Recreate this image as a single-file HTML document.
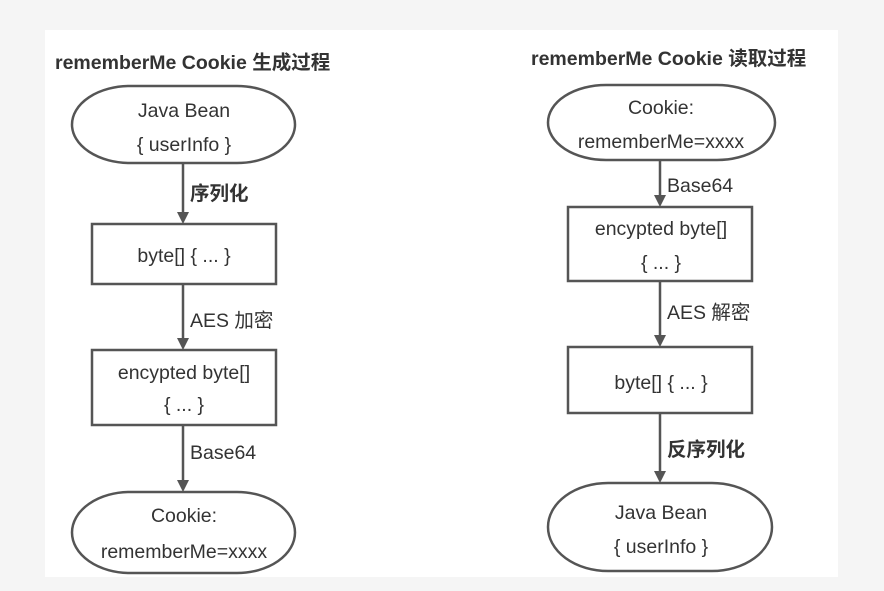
<!DOCTYPE html>
<html><head><meta charset="utf-8"><style>
html,body{margin:0;padding:0;background:#f5f5f5;width:884px;height:591px;overflow:hidden}
svg{display:block}
text{font-family:"Liberation Sans","Noto Sans CJK SC",sans-serif;fill:#333;font-size:19.5px}
.b{font-weight:bold}
</style></head><body>
<svg width="884" height="591" viewBox="0 0 884 591">
<rect x="45" y="30" width="793" height="547" fill="#fff"/>
<g stroke="#555" stroke-width="2.5" fill="none">
<rect x="72" y="86" width="223" height="77" rx="58" ry="38.5"/>
<rect x="92" y="224" width="184" height="60"/>
<rect x="92" y="350" width="184" height="75"/>
<rect x="72" y="492" width="223" height="81" rx="58" ry="40.5"/>
<line x1="183" y1="163" x2="183" y2="214"/>
<line x1="183" y1="284" x2="183" y2="340"/>
<line x1="183" y1="425" x2="183" y2="482"/>
<rect x="548" y="85" width="227" height="75" rx="58" ry="37.5"/>
<rect x="568" y="207" width="184" height="74"/>
<rect x="568" y="347" width="184" height="66"/>
<rect x="548" y="483" width="224" height="88" rx="60" ry="44"/>
<line x1="660" y1="160" x2="660" y2="197"/>
<line x1="660" y1="281" x2="660" y2="337"/>
<line x1="660" y1="413" x2="660" y2="473"/>
</g>
<g fill="#555">
<path d="M177,212 L189,212 L183,224 Z"/>
<path d="M177,338 L189,338 L183,350 Z"/>
<path d="M177,480 L189,480 L183,492 Z"/>
<path d="M654,195 L666,195 L660,207 Z"/>
<path d="M654,335 L666,335 L660,347 Z"/>
<path d="M654,471 L666,471 L660,483 Z"/>
</g>
<text x="55" y="69" class="b" font-size="21">rememberMe Cookie 生成过程</text>
<text x="531" y="65" class="b" font-size="20.5">rememberMe Cookie 读取过程</text>
<g text-anchor="middle">
<text x="184" y="117">Java Bean</text>
<text x="184" y="151">{ userInfo }</text>
<text x="184" y="262">byte[] { ... }</text>
<text x="184" y="379">encypted byte[]</text>
<text x="184" y="411">{ ... }</text>
<text x="184" y="522">Cookie:</text>
<text x="184" y="558">rememberMe=xxxx</text>
<text x="661" y="114">Cookie:</text>
<text x="661" y="148">rememberMe=xxxx</text>
<text x="661" y="235">encypted byte[]</text>
<text x="661" y="269">{ ... }</text>
<text x="661" y="389">byte[] { ... }</text>
<text x="661" y="519">Java Bean</text>
<text x="661" y="553">{ userInfo }</text>
</g>
<text x="190" y="200" class="b">序列化</text>
<text x="190" y="327">AES 加密</text>
<text x="190" y="459">Base64</text>
<text x="667" y="192">Base64</text>
<text x="667" y="319">AES 解密</text>
<text x="667" y="456" class="b">反序列化</text>
</svg>
</body></html>
